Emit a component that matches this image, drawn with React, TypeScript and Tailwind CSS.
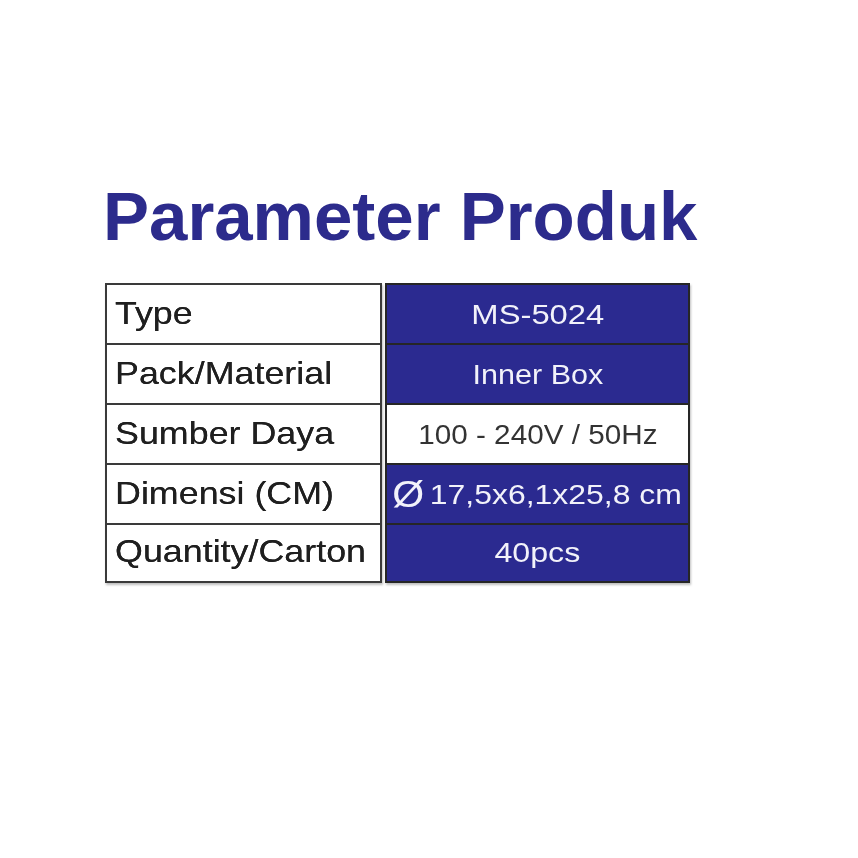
const rows = [
  { label: 'Type', value: 'MS-5024', dark: true, sx: 'scale-x-[1.17]' },
  { label: 'Pack/Material', value: 'Inner Box', dark: true, sx: 'scale-x-[1.09]' },
  { label: 'Sumber Daya', value: '100 - 240V / 50Hz', dark: false, sx: 'scale-x-[1.06]' },
  { label: 'Dimensi (CM)', value: '17,5x6,1x25,8 cm', dark: true, dia: true, sx: 'scale-x-[1.14]' },
  { label: 'Quantity/Carton', value: '40pcs', dark: true, sx: 'scale-x-[1.15]' },
]

export default function App() {
  return (
    <div className="min-h-[858px] w-[858px] bg-white pl-[103px] pt-[182px] font-['Liberation_Sans',Arial,sans-serif]">
      <h1 className="text-[69px] font-bold leading-none text-[#2c2b8c]">Parameter Produk</h1>
      <div className="ml-[2px] mt-[32px] flex w-[585px] flex-col drop-shadow-[1px_2px_1px_rgba(0,0,0,0.25)]">
        {rows.map((r, i) => (
          <div key={r.label} className="flex h-[60px] gap-[3px]">
            <div
              className={`flex w-[277px] items-center border-x-2 border-t-2 border-[#3a3a3a] bg-white pb-1 pl-[8px] text-[32px] text-[#1f1f1f] [text-shadow:0_0_0.5px_#1f1f1f] ${
                i === rows.length - 1 ? 'h-[60px] border-b-2' : 'h-[62px]'
              }`}
            >
              <span className="inline-block origin-left scale-x-[1.12] whitespace-nowrap">{r.label}</span>
            </div>
            <div
              className={`flex w-[305px] items-center justify-center border-x-2 border-t-2 border-[#262626] text-[28px] ${
                r.dark ? 'bg-[#2b2a90] text-[#f2f2fa]' : 'bg-white text-[#333333]'
              } ${i === rows.length - 1 ? 'h-[60px] border-b-2' : 'h-[62px]'}`}
            >
              <span className={`inline-flex items-center whitespace-nowrap ${r.sx}`}>
                {r.dia && <span className="mr-[5px] text-[36px] leading-none">Ø</span>}
                {r.value}
              </span>
            </div>
          </div>
        ))}
      </div>
    </div>
  )
}
